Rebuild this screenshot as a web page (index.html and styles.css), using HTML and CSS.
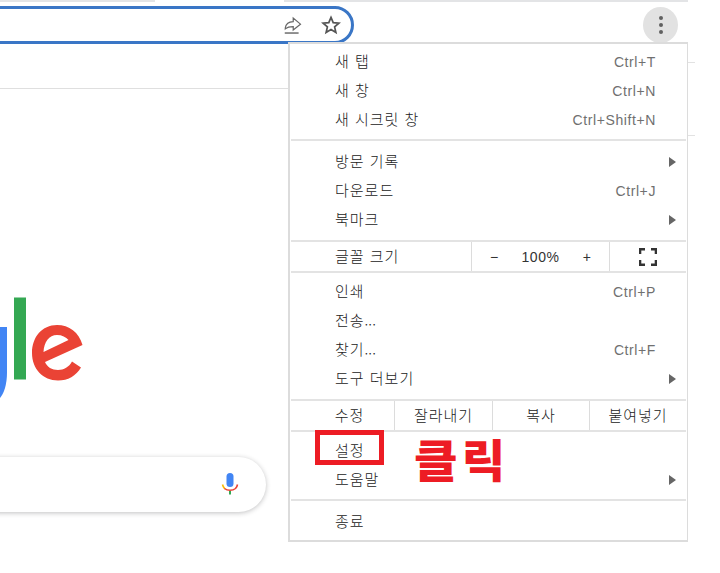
FILE: index.html
```html
<!DOCTYPE html>
<html lang="ko">
<head>
<meta charset="utf-8">
<title>Chrome 메뉴</title>
<link rel="stylesheet" href="styles.css">
</head>
<body>
<div class="page">
  <div class="tabstrip"><div class="tab-a"></div><div class="tab-b"></div></div>
  <header class="toolbar">
    <div class="omnibox">
      <svg class="ico" width="22" height="22" viewBox="0 0 20 20" fill="none" stroke="#666" stroke-width="1.100"><path d="M3 12.500c.6-3.600 3-5.400 7.200-5.600V3.600l6.600 5.600-6.600 5.400v-3.200c-3 0-5.200.3-7.200 2.100z"/><path d="M2.500 17.300h12.600" stroke-width="1.300"/></svg>
      <svg class="ico" width="20" height="20" viewBox="0 0 20 20" fill="none" stroke="#555" stroke-width="1.700"><path d="M10 2.400l2.200 5.300 5.700.5-4.300 3.700 1.300 5.600L10 14.600l-4.900 2.900 1.300-5.600-4.300-3.700 5.700-.5z"/></svg>
    </div>
    <button class="kebab" aria-label="메뉴"><i></i><i></i><i></i></button>
  </header>
  <div class="hairline"></div>
  <main class="ntp">
    <svg class="logo" width="90" height="115" viewBox="0 0 90 115">
      <path d="M0 37h7v45c0 13-3 21-7 26z" fill="#4285f4"/>
      <rect x="14" y="7.500" width="12" height="82" fill="#34a853"/>
      <path fill-rule="evenodd" fill="#ea4335" d="M82.500 55C79 42 69 35 57 35 42 35 32 47 32 63c0 16 11 27.500 26 27.500 10 0 18-4.500 23-13l-9-6c-3 5.500-8 8.500-14 8.500-6 0-11-3-13-8zM43.500 62c.5-10 5.500-17 13.500-17 5 0 9 2 11.500 5z"/>
    </svg>
    <div class="searchbox">
      <svg width="18" height="26" viewBox="0 0 18 26" fill="none">
        <rect x="5.500" y="1" width="7" height="14" rx="3.500" fill="#4285f4"/>
        <path d="M1.500 12.500c.5 2.200 1.200 3.300 2.300 4.300" stroke="#fbbc04" stroke-width="1.600"/>
        <path d="M3.500 16.500c3 2.400 8 2.400 11 0 1-1 1.700-2.200 2-4" stroke="#ea4335" stroke-width="1.600"/>
        <path d="M9 19v3.500" stroke="#34a853" stroke-width="2"/>
      </svg>
    </div>
  </main>
  <div class="tick tick-a"></div>
  <div class="tick tick-b"></div>

  <nav class="menu">
    <section class="group g-first">
      <div class="row"><span>새 탭</span><kbd>Ctrl+T</kbd></div>
      <div class="row"><span>새 창</span><kbd>Ctrl+N</kbd></div>
      <div class="row"><span>새 시크릿 창</span><kbd>Ctrl+Shift+N</kbd></div>
    </section>
    <section class="group g-second">
      <div class="row"><span>방문 기록</span><b class="arrow"></b></div>
      <div class="row"><span>다운로드</span><kbd>Ctrl+J</kbd></div>
      <div class="row"><span>북마크</span><b class="arrow"></b></div>
    </section>
    <section class="zoomrow">
      <span class="zoomlabel">글꼴 크기</span>
      <div class="zoomctl"><span>−</span><span class="pct">100%</span><span>+</span></div>
      <div class="full">
        <svg width="18" height="18" viewBox="0 0 18 18" fill="none" stroke="#333" stroke-width="2.600"><path d="M1 6V1.300h5M12 1.300h5V6M17 12v4.700h-5M6 16.700H1V12"/></svg>
      </div>
    </section>
    <section class="group g-third">
      <div class="row"><span>인쇄</span><kbd>Ctrl+P</kbd></div>
      <div class="row"><span>전송<em class="dots">...</em></span></div>
      <div class="row"><span>찾기<em class="dots">...</em></span><kbd>Ctrl+F</kbd></div>
      <div class="row"><span>도구 더보기</span><b class="arrow"></b></div>
    </section>
    <section class="editrow">
      <span class="e-first">수정</span><span class="e-cell e-cut">잘라내기</span><span class="e-cell e-copy">복사</span><span class="e-cell e-paste">붙여넣기</span>
    </section>
    <section class="group g-fourth">
      <div class="row"><span>설정</span></div>
      <div class="row"><span>도움말</span><b class="arrow"></b></div>
    </section>
    <section class="group g-last">
      <div class="row"><span>종료</span></div>
    </section>
  </nav>

  <div class="mark"></div>
  <div class="click">클릭</div>
</div>
</body>
</html>
```
FILE: styles.css
```css
* { box-sizing: border-box; }
html, body { margin: 0; padding: 0; background: #fff; }
.page {
  position: relative;
  width: 720px;
  height: 573px;
  overflow: hidden;
  background: #fff;
  font-family: "Noto Sans CJK KR", "Noto Sans", sans-serif;
}
.tabstrip { display: flex; height: 2px; justify-content: space-between; width: 688px; }
.tab-a { width: 155px; background: #e3e4e6; }
.tab-b { width: 404px; background: #e3e4e6; }

.toolbar { display: flex; align-items: center; height: 46px; padding-right: 42px; }
.omnibox {
  width: 374px;
  height: 38px;
  margin-left: -20px;
  border: 3px solid #3a76c6;
  border-radius: 19px;
  display: flex;
  align-items: center;
  justify-content: flex-end;
  gap: 17px;
  padding-right: 10px;
}
.ico { display: block; }
.kebab {
  margin-left: auto;
  width: 35px;
  height: 36px;
  border: 0;
  border-radius: 50%;
  background: #e2e2e2;
  padding: 0;
  display: flex;
  flex-direction: column;
  align-items: center;
  justify-content: center;
  gap: 3px;
}
.kebab i { width: 4px; height: 4px; border-radius: 50%; background: #606060; display: block; }

.hairline { height: 1px; width: 289px; background: #dfdfdf; margin-top: 40px; }
.ntp { position: relative; height: 484px; }
.logo { position: absolute; left: 0; top: 201px; }
.searchbox {
  position: absolute;
  left: -40px;
  top: 368px;
  width: 306px;
  height: 55px;
  border-radius: 28px;
  background: #fff;
  box-shadow: 0 1px 5px rgba(32, 33, 36, .28);
  display: flex;
  align-items: center;
  justify-content: flex-end;
  padding-right: 27px;
}
.tick { position: absolute; left: 688px; width: 7px; height: 1px; background: #e2e2e2; }
.tick-a { top: 62px; }
.tick-b { top: 135px; }

.menu {
  position: absolute;
  left: 288px;
  top: 42px;
  width: 400px;
  height: 500px;
  background: #fff;
  border: 2px solid #dcdcdc;
  border-right-width: 1px;
  color: #222;
  font-size: 15px;
  line-height: 20px;
  letter-spacing: 1px;
}
.group { border-bottom: 2px solid #e3e3e3; margin: 0 1px; }
.g-first { height: 97px; padding-top: 3px; }
.g-second { height: 101px; padding-top: 6px; }
.g-third { height: 128px; padding-top: 4px; }
.g-fourth { height: 69px; padding-top: 4px; }
.g-last { height: 39px; border-bottom: 0; padding-top: 6px; }
.row {
  display: flex;
  align-items: center;
  justify-content: space-between;
  height: 29px;
  padding: 0 30px 0 44px;
}
.row > span { font-weight: 300; margin-bottom: 1px; }
.dots { font-style: normal; letter-spacing: 0; }
kbd {
  font-family: "Liberation Sans", sans-serif;
  font-size: 14px;
  color: #707070;
  letter-spacing: .6px;
}
.arrow {
  width: 0;
  height: 0;
  margin-right: -20px;
  border-left: 7px solid #666;
  border-top: 5px solid transparent;
  border-bottom: 5px solid transparent;
}
.zoomrow {
  display: flex;
  align-items: stretch;
  height: 31px;
  margin: 0 1px;
  border-bottom: 2px solid #e3e3e3;
}
.zoomlabel { width: 180px; padding: 0 0 1px 44px; display: flex; align-items: center; font-weight: 300; }
.zoomctl {
  width: 139px;
  border-left: 1px solid #dcdcdc;
  border-right: 1px solid #dcdcdc;
  display: flex;
  align-items: center;
  justify-content: space-between;
  padding: 0 18px;
  font-family: "Liberation Sans", sans-serif;
  font-size: 14px;
  letter-spacing: 0;
  color: #333;
}
.pct { letter-spacing: .6px; }
.full { flex: 1; display: flex; align-items: center; justify-content: center; }
.editrow {
  display: flex;
  height: 31px;
  margin: 0 1px;
  border-bottom: 2px solid #e3e3e3;
  align-items: stretch;
  font-weight: 300;
}
.editrow span { display: flex; align-items: center; justify-content: center; padding-bottom: 1px; }
.editrow .e-first { width: 103px; padding-left: 14px; }
.e-cell { border-left: 1px solid #dcdcdc; }
.e-cut { width: 98px; }
.e-copy { width: 97px; }
.e-paste { flex: 1; }

.mark {
  position: absolute;
  left: 315px;
  top: 430px;
  width: 69px;
  height: 35px;
  border: 5px solid #ed1c24;
}
.click {
  position: absolute;
  left: 414px;
  top: 426px;
  color: #ed1c24;
  font-size: 45px;
  line-height: 66px;
  font-weight: 900;
  letter-spacing: 4px;
  transform: scaleX(1.05);
  transform-origin: left center;
}
```
